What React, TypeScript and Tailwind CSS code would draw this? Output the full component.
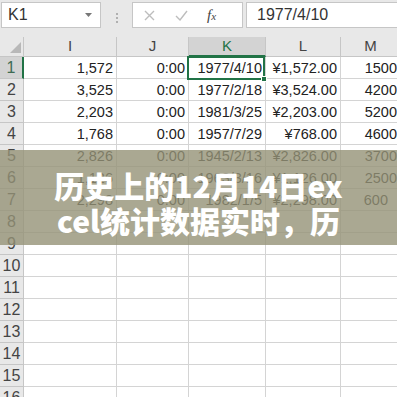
import React from "react";

const rows: string[][] = [
  ["1,572", "0:00", "1977/4/10", "¥1,572.00", "1500"],
  ["3,525", "0:00", "1977/2/18", "¥3,524.00", "4200"],
  ["2,203", "0:00", "1981/3/25", "¥2,203.00", "5200"],
  ["1,768", "0:00", "1957/7/29", "¥768.00", "4600"],
  ["2,826", "0:00", "1945/2/13", "¥2,826.00", "3700"],
  ["1,126", "0:00", "1963/3/16", "¥1,126.00", "2500"],
  ["2,298", "0:00", "1982/1/5", "¥2,298.00", "600"],
  ["", "", "", "", ""],
  ["", "", "", "", ""],
  ["", "", "", "", ""],
  ["", "", "", "", ""],
  ["", "", "", "", ""],
  ["", "", "", "", ""],
  ["", "", "", "", ""],
  ["", "", "", "", ""],
  ["", "", "", "", ""],
];

const colWidths = ["w-[93px]", "w-[72px]", "w-[77px]", "w-[75px]", "w-[60px]"];
const colNames = ["I", "J", "K", "L", "M"];

export default function App() {
  return (
    <div className="relative w-[397px] h-[397px] overflow-hidden bg-white font-['Liberation_Sans',Arial,sans-serif] text-[#222]">
      {/* formula bar */}
      <div className="flex h-[37px] bg-[#e8e8e8] pt-[2px] pl-[1px]">
        <div className="flex h-[26px] w-[100px] items-center justify-between border border-[#c6c6c6] bg-white pl-[6px] pr-[8px]">
          <span className="text-[16px] text-[#333]">K1</span>
          <svg width="7" height="4" viewBox="0 0 7 4">
            <path d="M0 0 L7 0 L3.5 4 Z" fill="#777" />
          </svg>
        </div>
        <div className="flex w-[31px] flex-col items-center justify-center gap-[2px] pb-[3px]">
          <div className="h-[2px] w-[2px] bg-[#b0b0b0]" />
          <div className="h-[2px] w-[2px] bg-[#b0b0b0]" />
          <div className="h-[2px] w-[2px] bg-[#b0b0b0]" />
        </div>
        <div className="flex h-[26px] w-[111px] items-center border border-[#c6c6c6] bg-white pl-[11px]">
          <svg width="11" height="11" viewBox="0 0 11 11">
            <path d="M1 1 L10 10 M10 1 L1 10" stroke="#bdbdbd" strokeWidth="1.4" />
          </svg>
          <svg className="ml-[20px]" width="13" height="11" viewBox="0 0 13 11">
            <path d="M1 6 L5 10 L12 1" stroke="#bdbdbd" strokeWidth="1.4" fill="none" />
          </svg>
          <span className="ml-[19px] font-['Liberation_Serif',serif] text-[15px] italic text-[#444]">
            f<span className="text-[11px]">x</span>
          </span>
        </div>
        <div className="ml-[3px] flex h-[26px] flex-1 items-center border border-r-0 border-[#c6c6c6] bg-white pl-[10px]">
          <span className="text-[16px] text-[#333]">1977/4/10</span>
        </div>
      </div>

      {/* column headers */}
      <div className="flex h-[20px] bg-[#e8e8e8]">
        <div className="relative w-[24px] shrink-0 border-r border-b border-[#c6c6c6]">
          <svg className="absolute right-[2px] bottom-[3px]" width="11" height="11" viewBox="0 0 11 11">
            <path d="M11 0 L11 11 L0 11 Z" fill="#b8b8b8" />
          </svg>
        </div>
        {colNames.map((c, i) => (
          <div
            key={c}
            className={`${colWidths[i]} shrink-0 flex items-center justify-center text-[15px] ${
              c === "K"
                ? "bg-[#d3d3d3] text-[#217346] border-r border-r-[#c6c6c6] border-b-2 border-b-[#217346]"
                : "text-[#444] border-r border-b border-[#c6c6c6]"
            }`}
          >
            {c}
          </div>
        ))}
      </div>

      {/* rows */}
      {rows.map((r, ri) => (
        <div key={ri} className="flex h-[22px]">
          <div
            className={`w-[24px] shrink-0 flex items-end justify-center pb-[1px] text-[16px] leading-[18px] border-b border-[#c6c6c6] ${
              ri === 0
                ? "bg-[#d3d3d3] text-[#3f6b52] border-r-2 border-r-[#217346]"
                : "bg-[#e8e8e8] text-[#444] border-r border-r-[#c6c6c6]"
            }`}
          >
            {ri + 1}
          </div>
          {r.map((v, ci) => (
            <div
              key={ci}
              className={`${colWidths[ci]} shrink-0 flex items-end justify-end border-r border-b border-[#d4d4d4] text-[14.5px] leading-[18px] pb-[1px] ${
                ci === 4 ? (v === "600" ? "pr-[12px]" : "pr-[3px]") : "pr-[3px]"
              }`}
            >
              {v}
            </div>
          ))}
        </div>
      ))}

      {/* selected cell K1 */}
      <div className="pointer-events-none absolute left-[187px] top-[56px] h-[24px] w-[78px] border-2 border-[#217346]">
        <div className="absolute -right-[4px] -bottom-[4px] h-[6px] w-[6px] border border-white bg-[#217346]" />
      </div>

      {/* overlay banner */}
      <div className="absolute left-0 top-[150px] flex h-[95px] w-full items-center justify-center bg-[rgba(149,146,119,0.8)] pt-[11px]">
        <div className="text-center font-['Noto_Sans_CJK_SC',sans-serif] text-[30px] font-black leading-[35px] text-white">
          历史上的12月14日ex
          <br />
          cel统计数据实时，历
        </div>
      </div>
    </div>
  );
}
